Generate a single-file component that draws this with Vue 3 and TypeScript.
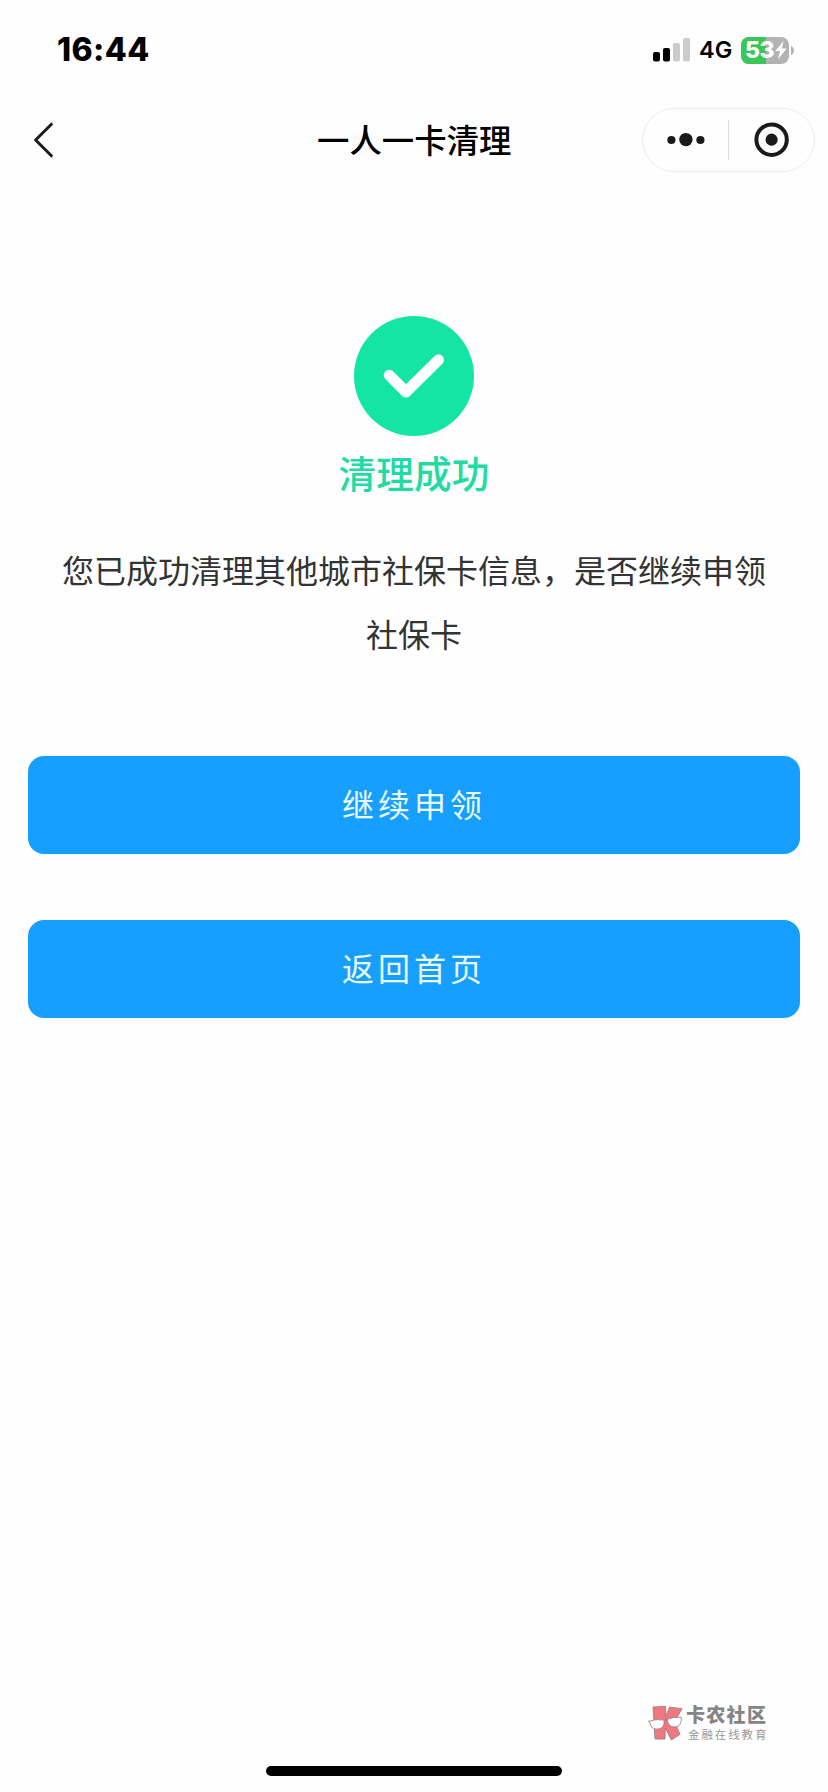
<script setup lang="ts">
interface Action {
  id: string
  label: string
}

const time = '16:44'
const network = '4G'
const battery = 53
const title = '一人一卡清理'
const actions: Action[] = [
  { id: 'continue', label: '继续申领' },
  { id: 'home', label: '返回首页' },
]
</script>

<template>
  <div class="screen">
    <header class="status">
      <span class="time">{{ time }}</span>
      <div class="indicators">
        <svg class="signal" width="37" height="24" viewBox="0 0 37 24">
          <rect x="0" y="14" width="7" height="9.5" rx="2" fill="#000" />
          <rect x="10" y="10" width="7" height="13.5" rx="2" fill="#000" />
          <rect x="20" y="5" width="7" height="18.5" rx="2" fill="#cbcbcb" />
          <rect x="30" y="0" width="7" height="23.5" rx="2" fill="#cbcbcb" />
        </svg>
        <span class="network">{{ network }}</span>
        <div class="battery">
          <div class="cell">
            <div class="charge" :style="{ width: battery + '%' }"></div>
            <span class="level">{{ battery }}</span>
            <svg class="bolt" width="12" height="18" viewBox="0 0 12 18">
              <path d="M8.5 0 L0.3 10 H5 L3.2 18 L11.7 7.6 H7 Z" fill="#fff" />
            </svg>
          </div>
          <svg width="3" height="9" viewBox="0 0 3 9">
            <path d="M0 0 Q3 1.5 3 4.5 Q3 7.5 0 9 Z" fill="#b3b3b3" />
          </svg>
        </div>
      </div>
    </header>

    <nav class="nav">
      <svg class="back" width="22" height="38" viewBox="0 0 22 38">
        <path d="M18.4 3.2 L2.6 19 L18.4 34.8" fill="none" stroke="#1c1c1c" stroke-width="3" stroke-linecap="round" stroke-linejoin="round" />
      </svg>
      <h1 class="title">{{ title }}</h1>
      <div class="capsule">
        <svg width="85" height="62" viewBox="0 0 85 62">
          <circle cx="28.4" cy="31" r="4.1" fill="#1a1a1a" />
          <circle cx="42.9" cy="30.6" r="6.7" fill="#1a1a1a" />
          <circle cx="57.4" cy="31" r="4.1" fill="#1a1a1a" />
        </svg>
        <i class="divider"></i>
        <svg width="84" height="62" viewBox="0 0 84 62">
          <circle cx="42.6" cy="30.7" r="15.2" fill="none" stroke="#1a1a1a" stroke-width="4" />
          <circle cx="42.6" cy="30.7" r="6.1" fill="#1a1a1a" />
        </svg>
      </div>
    </nav>

    <main class="result">
      <svg class="badge" width="120" height="120" viewBox="0 0 120 120">
        <circle cx="60" cy="60" r="60" fill="#14e5a3" />
        <path d="M35.2 59.2 L52 76 L84.5 43.8" fill="none" stroke="#fff" stroke-width="11" stroke-linecap="round" stroke-linejoin="round" />
      </svg>
      <h2 class="headline">清理成功</h2>
      <p class="message">您已成功清理其他城市社保卡信息，是否继续申领社保卡</p>
      <div class="actions">
        <button v-for="a in actions" :key="a.id" type="button" class="action">{{ a.label }}</button>
      </div>
    </main>

    <div class="watermark">
      <svg width="37" height="38" viewBox="9 9 111 114">
        <g stroke="#938080" stroke-width="2.5" stroke-linejoin="round">
          <path d="M27 21 L65 19 L64 50 L77 21 L114 26 L92 66 L108 103 L82 120 L64 84 L63 117 L33 117 Z" fill="#ee7780" />
          <path d="M13 64 Q36 56 60 60 Q63 84 43 87 Q21 90 18 68 Z" fill="#fff" />
          <path d="M69 58 Q90 50 112 52 Q114 79 94 81 Q73 83 69 58 Z" fill="#fff" />
          <path d="M60 62 Q64 56 69 60" fill="none" />
        </g>
      </svg>
      <div class="brand">
        <span class="brand-name">卡农社区</span>
        <span class="brand-sub">金融在线教育</span>
      </div>
    </div>

    <div class="home-bar"></div>
  </div>
</template>

<style>
body {
  margin: 0;
  background: #fff;
}
</style>

<style scoped>
.screen {
  position: relative;
  box-sizing: border-box;
  width: 828px;
  height: 1792px;
  display: flex;
  flex-direction: column;
  background: #fefefe;
  overflow: hidden;
  font-family: "Noto Sans CJK SC", sans-serif;
}
.status {
  height: 100px;
  box-sizing: border-box;
  padding: 0 34px 0 57px;
  display: flex;
  justify-content: space-between;
  align-items: center;
  font-family: Inter, sans-serif;
  color: #000;
}
.time {
  font-size: 32px;
  font-weight: 800;
  line-height: 40px;
  letter-spacing: 0.4px;
}
.indicators {
  display: flex;
  align-items: center;
}
.network {
  margin-left: 9px;
  width: 42px;
  font-size: 23.5px;
  font-weight: 600;
  line-height: 30px;
}
.battery {
  display: flex;
  align-items: center;
  gap: 2px;
}
.cell {
  position: relative;
  width: 48px;
  height: 27px;
  border-radius: 8px;
  background: #b3b3b3;
  overflow: hidden;
  display: flex;
  align-items: center;
}
.charge {
  position: absolute;
  left: 0;
  top: 0;
  height: 100%;
  background: #3ac759;
}
.level {
  position: relative;
  margin-left: 4px;
  width: 30px;
  font-size: 23px;
  font-weight: 800;
  line-height: 27px;
  letter-spacing: -0.6px;
  color: #fff;
}
.bolt {
  position: relative;
}
.nav {
  height: 80px;
  box-sizing: border-box;
  padding: 0 13px 0 32.5px;
  display: grid;
  grid-template-columns: 173px 1fr 173px;
  align-items: center;
  justify-items: center;
}
.back {
  justify-self: start;
}
.title {
  margin: 0;
  padding: 0 19px 3px 0;
  font-size: 32.4px;
  font-weight: 500;
  line-height: 48px;
  color: #000;
}
.capsule {
  justify-self: end;
  box-sizing: border-box;
  width: 173px;
  height: 64px;
  border: 1px solid #ececec;
  border-radius: 32px;
  display: flex;
  align-items: center;
}
.divider {
  width: 1px;
  height: 40px;
  background: #dcdcdc;
}
.result {
  padding: 136px 28px 0;
  display: flex;
  flex-direction: column;
  align-items: center;
}
.headline {
  margin: 8px 0 0;
  font-size: 37.7px;
  font-weight: 500;
  line-height: 56px;
  color: #22dba3;
}
.message {
  margin: 37px 0 0;
  width: 704px;
  font-size: 32px;
  line-height: 64px;
  text-align: center;
  color: #333;
}
.actions {
  margin-top: 91px;
  width: 100%;
  display: flex;
  flex-direction: column;
  gap: 66px;
}
.action {
  height: 98px;
  padding: 0 0 4px;
  border: 0;
  border-radius: 16px;
  background: #179fff;
  color: #e9fbff;
  font-family: inherit;
  font-size: 32px;
  font-weight: 400;
  letter-spacing: 4px;
  line-height: 94px;
}
.watermark {
  position: absolute;
  left: 647px;
  top: 1703px;
  display: flex;
}
.brand {
  display: flex;
  flex-direction: column;
  padding-left: 2px;
  white-space: nowrap;
}
.brand-name {
  font-size: 19px;
  font-weight: 900;
  line-height: 22px;
  letter-spacing: 1.3px;
  color: #858585;
}
.brand-sub {
  margin-top: 1px;
  padding-left: 2px;
  font-size: 11.5px;
  line-height: 16px;
  letter-spacing: 1.9px;
  color: #999;
}
.home-bar {
  width: 296px;
  height: 10px;
  margin: auto auto 16px;
  border-radius: 5px;
  background: #000;
}
</style>
